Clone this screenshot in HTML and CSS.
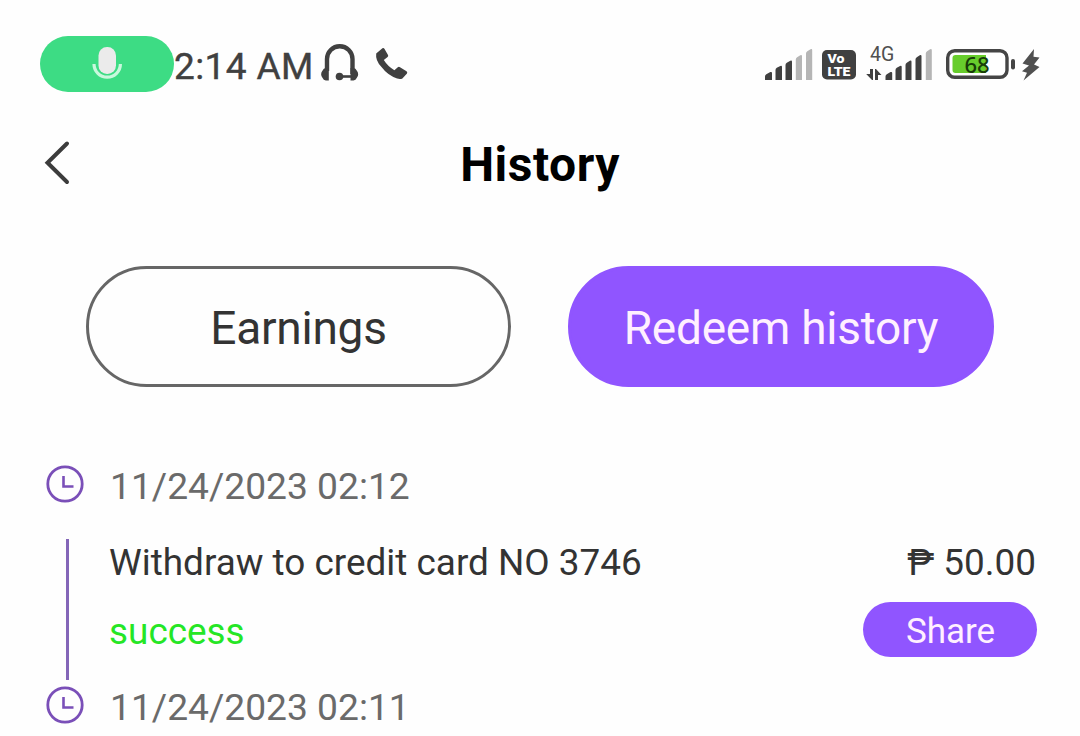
FILE: index.html
```html
<!DOCTYPE html>
<html lang="en">
<head>
    <meta charset="UTF-8">
    <meta name="viewport" content="width=device-width, initial-scale=1.0">
    <title>History</title>
    <link rel="stylesheet" href="styles.css">
</head>
<body>
    <!-- Status bar -->
    <div class="status-bar">
        <div class="mic-pill">
            <svg width="30" height="36" viewBox="0 0 30 36">
                <rect x="6.500" y="1" width="17.5" height="27" rx="8.500" fill="#ebebeb"/>
                <path d="M2 18a13.2 13.2 0 0 0 26.4 0" fill="none" stroke="#c9f8dd" stroke-width="3.2"/>
            </svg>
        </div>
        <span class="time">2:14 AM</span>
        <svg class="headset" width="40" height="38" viewBox="0 0 40 38">
            <path d="M7 27V15a12.5 12.5 0 0 1 25.5 0v15" fill="none" stroke="#404040" stroke-width="4.4"/>
            <path d="M8.800 24v12.500h-3a4 4 0 0 1-3.200-2.500a5.500 5.500 0 0 1 0-7.500a4 4 0 0 1 3.200-2.500zM30.500 24v12.500h3a4 4 0 0 0 3.200-2.500a5.500 5.500 0 0 0 0-7.500a4 4 0 0 0-3.200-2.500z" fill="#404040"/>
            <circle cx="19.500" cy="32.500" r="3.800" fill="#404040"/>
            <path d="M19 32.500h13" stroke="#404040" stroke-width="2.600"/>
        </svg>
        <svg class="phone" width="34" height="34" viewBox="0 0 34 34">
            <path d="M1.200 6.500L7.400 1.300q1.200-.7 2 .4l3.600 6.400q.6 1.200-.4 2l-3.800 3q4 6.400 10.600 10.200l3.400-3q1-.8 2.200-.1l6.500 4.100q1.200.8.500 2.100l-4.600 5q-2 1.200-5.300.2q-9.500-3.300-15.600-11.500Q.2 13.400 1.200 6.500z" fill="#404040"/>
        </svg>
        <div class="status-right">
            <svg class="signal" width="48" height="32" viewBox="0 0 48 32">
                <path d="M0 31v-3.500q0-1.500 1.300-2.200l4-2.200q1.700-.7 1.700 1V31zM10.500 31V21q0-1.500 1.300-2.300l3.500-1.800q1.700-.7 1.700 1V31zM20.500 31V16q0-1.500 1.300-2.300l3.500-1.900q1.700-.7 1.700 1V31z" fill="#404040"/>
                <path d="M30.800 31V10.500q0-1.500 1.300-2.300l3.200-2q1.700-.7 1.700 1V31zM41 31V4.500q0-1.500 1.300-2.300l3.200-2q1.700-.7 1.700 1V31z" fill="#b5b5b5"/>
            </svg>
            <svg class="volte" width="34" height="30" viewBox="0 0 34 30">
                <rect width="34" height="29.500" rx="5" fill="#404040"/>
                <text x="5.500" y="13" class="volte-text" textLength="17" lengthAdjust="spacingAndGlyphs">Vo</text>
                <text x="5.500" y="26.300" class="volte-text" textLength="23" lengthAdjust="spacingAndGlyphs">LTE</text>
            </svg>
            <svg class="network" width="68" height="40" viewBox="0 -4 68 40">
                <text x="4" y="15.500" class="network-text">4G</text>
                <path d="M4 24h3v11h-1L.2 29H4zM9 35V24h1l5.500 6H12v5z" fill="#404040"/>
                <path d="M19.500 35v-3.500q0-1.500 1.300-2.200l3.700-2.200q1.700-.7 1.700 1V35zM29.500 35V25q0-1.500 1.300-2.300l3.200-1.800q1.700-.7 1.700 1V35zM39.500 35V20q0-1.500 1.300-2.300l3-1.900q1.700-.7 1.700 1V35zM49.500 35V14.500q0-1.500 1.300-2.300l3-2q1.700-.7 1.700 1V35z" fill="#404040"/>
                <path d="M59.800 35V8.500q0-1.500 1.300-2.300l3-2q1.700-.7 1.700 1V35z" fill="#b5b5b5"/>
            </svg>
            <svg class="battery" width="70" height="30" viewBox="0 0 70 30">
                <rect x="1.700" y="1.700" width="59.300" height="26.600" rx="7" fill="#fff" stroke="#454545" stroke-width="3.400"/>
                <path d="M9.500 6H40v18H9.500a3 3 0 0 1-3-3V9a3 3 0 0 1 3-3z" fill="#67cd2c"/>
                <rect x="65" y="10" width="4" height="10.500" rx="2" fill="#454545"/>
                <text x="18.500" y="23.600" class="battery-text">68</text>
            </svg>
            <svg class="bolt" width="20" height="32" viewBox="0 0 20 32">
                <path d="M13 0L1.500 14.500l6.500 2L1 22.300l5 1.500L2.500 31.500L18.500 18l-5.500-2.500L18.500 8.500l-6-.8z" fill="#505050"/>
            </svg>
        </div>
    </div>

    <!-- Title -->
    <div class="header">
        <svg class="back" width="28" height="46" viewBox="0 0 28 46">
            <path d="M23 3.500L3.500 22.700L23 42" fill="none" stroke="#3c3c3c" stroke-width="4" stroke-linecap="round" stroke-linejoin="miter"/>
        </svg>
        <h1>History</h1>
    </div>

    <!-- Tabs -->
    <div class="tabs">
        <button class="tab">Earnings</button>
        <button class="tab active">Redeem history</button>
    </div>

    <!-- History list -->
    <div class="history">
        <div class="entry">
            <div class="entry-date">
                <svg width="38" height="38" viewBox="0 0 38 38">
                    <circle cx="19" cy="19" r="17.200" fill="none" stroke="#7a4fb8" stroke-width="2.800"/>
                    <path d="M17.500 11v10.500h10" fill="none" stroke="#7a4fb8" stroke-width="2.600"/>
                </svg>
                <span>11/24/2023 02:12</span>
            </div>
            <div class="entry-body">
                <div class="row">
                    <span class="desc">Withdraw to credit card NO 3746</span>
                    <span class="amount">₱ 50.00</span>
                </div>
                <div class="row">
                    <span class="success">success</span>
                    <button class="share">Share</button>
                </div>
            </div>
        </div>
        <div class="entry">
            <div class="entry-date">
                <svg width="38" height="38" viewBox="0 0 38 38">
                    <circle cx="19" cy="19" r="17.200" fill="none" stroke="#7a4fb8" stroke-width="2.800"/>
                    <path d="M17.500 11v10.500h10" fill="none" stroke="#7a4fb8" stroke-width="2.600"/>
                </svg>
                <span>11/24/2023 02:11</span>
            </div>
        </div>
    </div>
</body>
</html>
```
FILE: styles.css
```css
* {
    box-sizing: border-box;
}

body {
    margin: 0;
    background-color: #fefefe;
    font-family: Roboto, sans-serif;
    color: #333;
}

svg {
    display: block;
    flex-shrink: 0;
}

button {
    padding: 0;
    border: none;
    font-family: inherit;
}

/* Status bar */
.status-bar {
    display: flex;
    height: 92px;
    padding: 36px 39px 0 40px;
}

.mic-pill {
    display: flex;
    justify-content: center;
    width: 134px;
    height: 56px;
    padding-top: 10px;
    border-radius: 28px;
    background-color: #3ddc84;
}

.time {
    width: 146px;
    font-size: 37px;
    line-height: 62px;
    letter-spacing: 0.4px;
    color: #404040;
    -webkit-text-stroke: 0.4px #404040;
    white-space: nowrap;
}

.headset {
    margin-top: 8px;
}

.phone {
    margin: 11px 0 0 15px;
}

.status-right {
    display: flex;
    margin-left: auto;
}

.signal {
    margin-top: 13px;
}

.volte {
    margin: 14px 0 0 9px;
}

.volte-text {
    font-size: 12.5px;
    font-weight: 900;
    fill: #fff;
}

.network {
    margin: 5px 0 0 10px;
}

.network-text {
    font-size: 19.5px;
    fill: #505050;
}

.battery {
    margin: 13px 0 0 12px;
}

.battery-text {
    font-family: "Noto Sans", sans-serif;
    font-size: 22px;
    font-weight: 500;
    fill: #173c08;
}

.bolt {
    margin: 13px 0 0 5px;
}

/* Title */
.header {
    display: grid;
    grid-template-columns: 1fr auto 1fr;
    align-items: center;
    height: 144px;
    padding: 0 44px;
}

.back {
    margin-bottom: 2px;
}

h1 {
    margin: 0;
    font-size: 48px;
    font-weight: 700;
    letter-spacing: 0.5px;
    color: #000;
}

/* Tabs */
.tabs {
    display: flex;
    justify-content: space-between;
    margin-top: 30px;
    padding: 0 86px;
}

.tab {
    width: 425px;
    height: 121px;
    padding-top: 3px;
    border: 3px solid #666;
    border-radius: 61px;
    background-color: transparent;
    font-size: 46px;
    letter-spacing: -0.25px;
    color: #333;
}

.tab.active {
    width: 426px;
    border-color: #9055ff;
    background-color: #9055ff;
    color: #fff0ff;
}

/* History list */
.history {
    padding: 78px 43px 0 46px;
}

.entry {
    height: 221px;
}

.entry:last-child {
    height: 50px;
}

.entry-date {
    display: flex;
    align-items: center;
    gap: 26px;
    height: 38px;
    font-size: 37.2px;
    color: #6a6a6a;
}

.entry-date span {
    padding-top: 3px;
}

.entry-body {
    height: 141px;
    margin: 36px 0 0 20px;
    padding-left: 40px;
    border-left: 3px solid #8466b8;
}

.row {
    display: flex;
    justify-content: space-between;
    font-size: 36.9px;
    line-height: 48px;
}

.row + .row {
    margin-top: 15px;
}

.amount {
    margin-right: 1px;
}

.success {
    padding-top: 6px;
    color: #25e625;
}

.share {
    width: 174px;
    height: 55px;
    padding: 3px 0 0 1px;
    border-radius: 28px;
    background-color: #9055ff;
    font-size: 35px;
    color: #fff0ff;
}
```
